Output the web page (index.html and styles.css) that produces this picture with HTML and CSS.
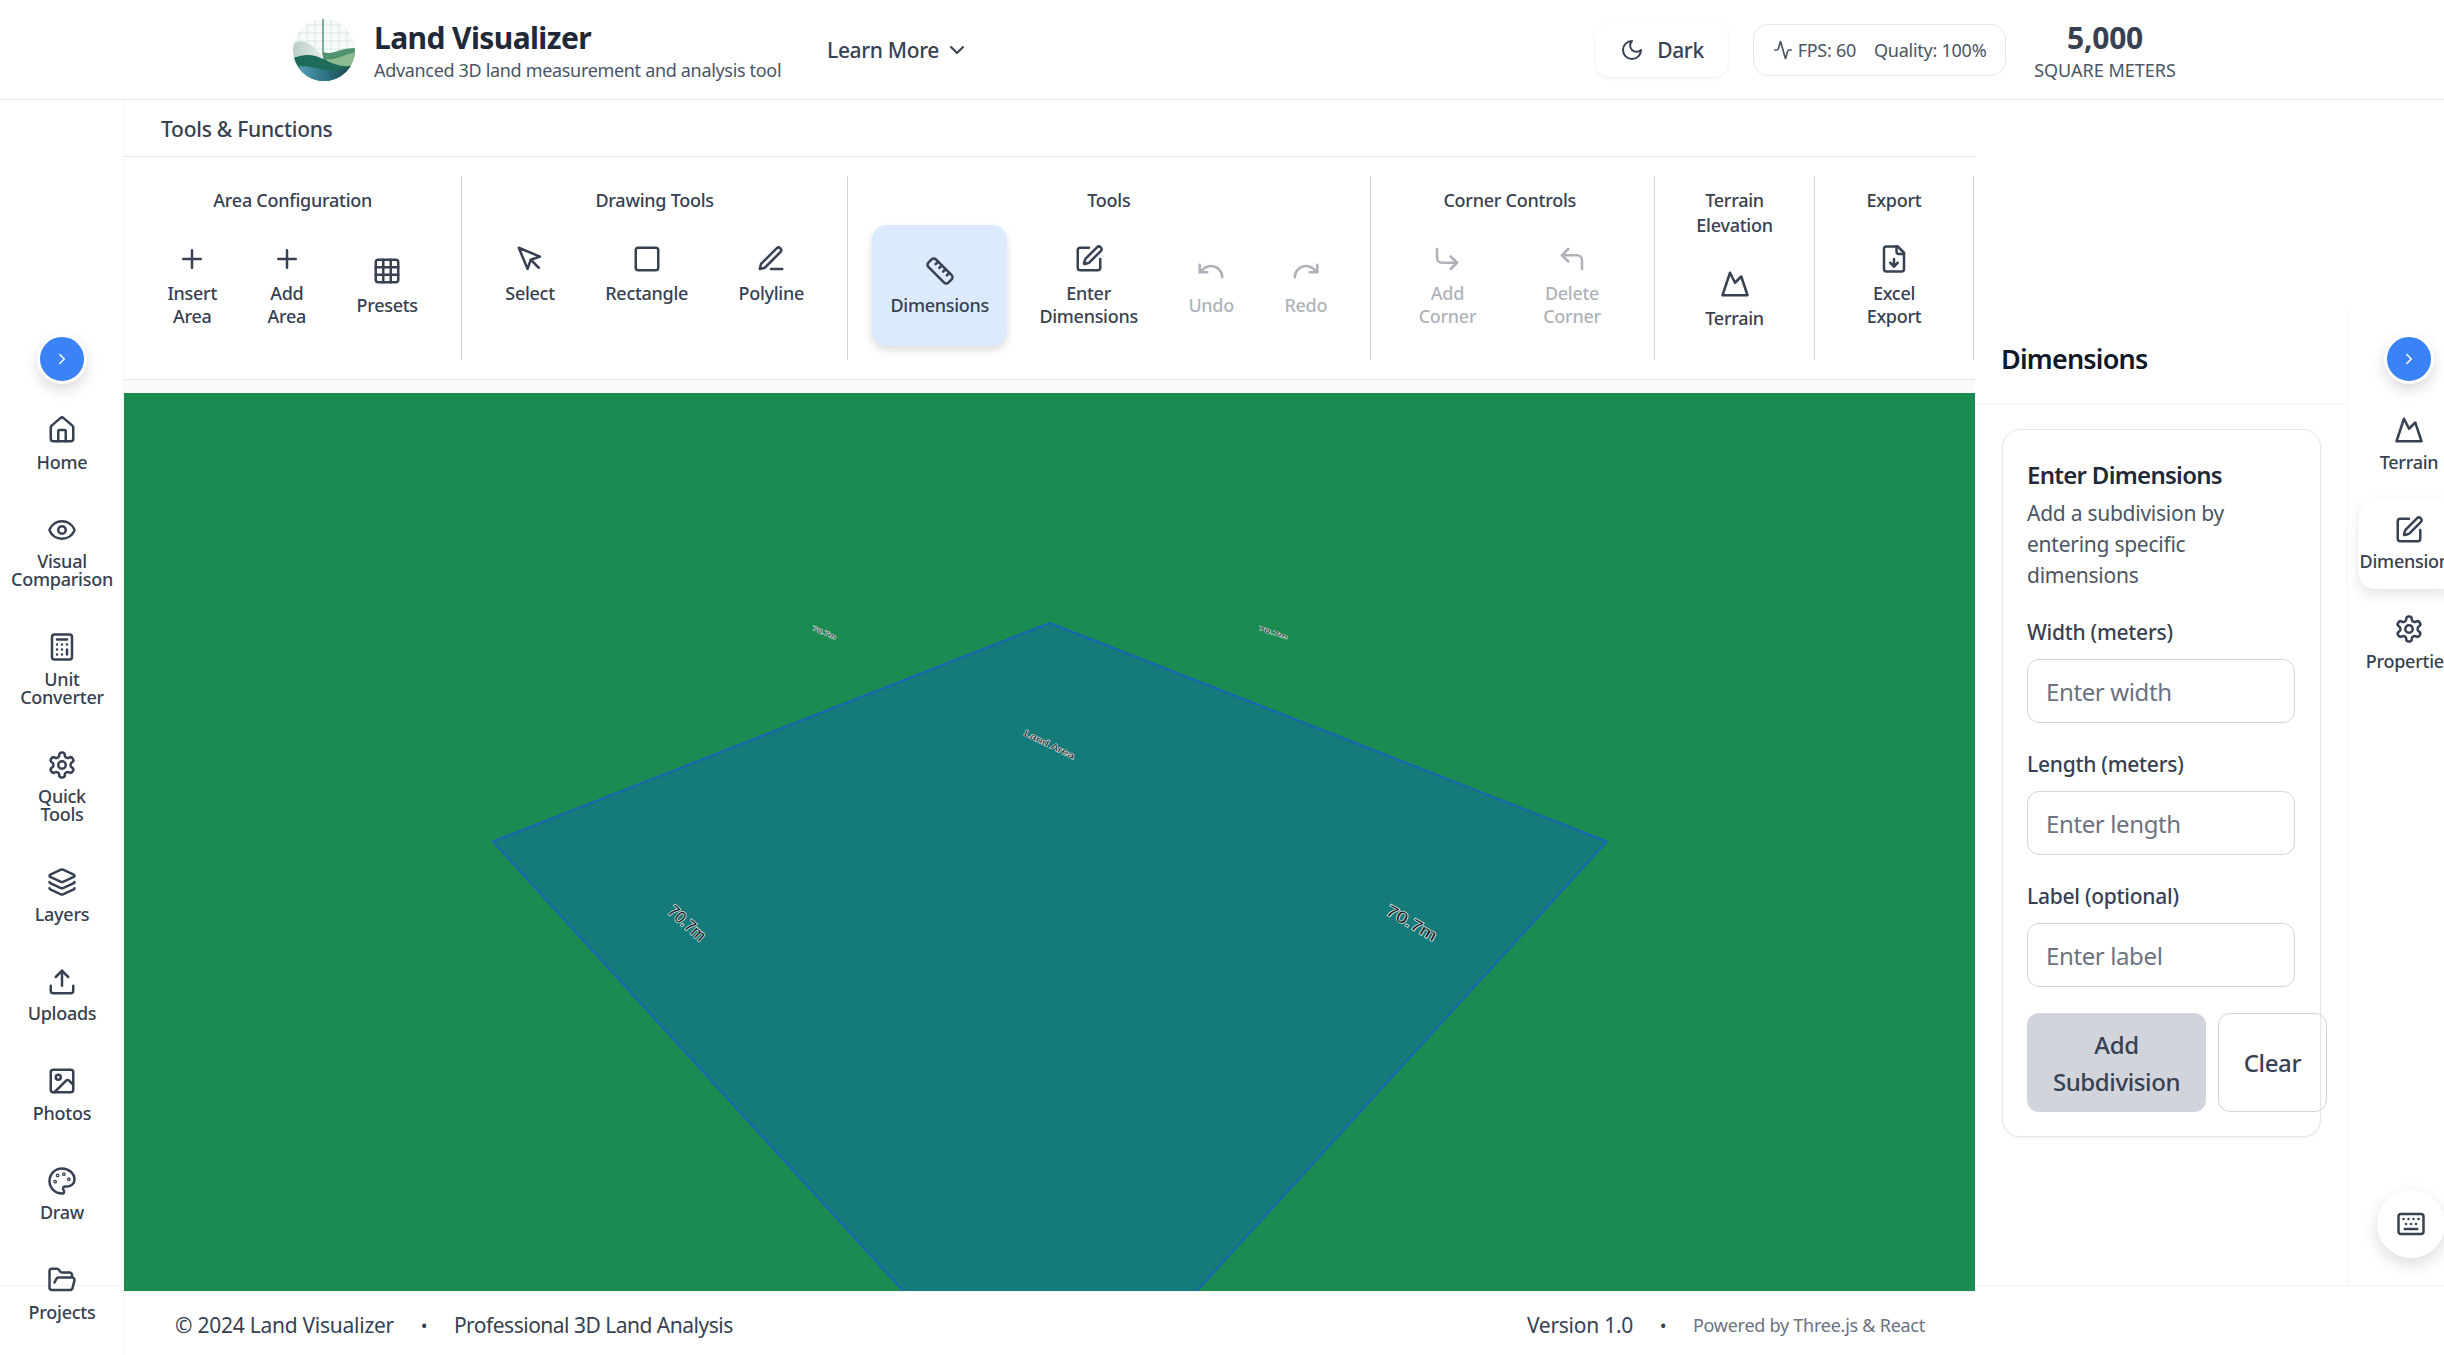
FILE: index.html
```html
<!DOCTYPE html>
<html lang="en">
<head>
<meta charset="utf-8">
<title>Land Visualizer</title>
<link rel="stylesheet" href="styles.css">
</head>
<body>
<svg class="sprite" aria-hidden="true">
  <symbol id="i-home" viewBox="0 0 24 24"><path d="M15 21v-8a1 1 0 0 0-1-1h-4a1 1 0 0 0-1 1v8"/><path d="M3 10a2 2 0 0 1 .709-1.528l7-5.999a2 2 0 0 1 2.582 0l7 5.999A2 2 0 0 1 21 10v9a2 2 0 0 1-2 2H5a2 2 0 0 1-2-2z"/></symbol>
  <symbol id="i-eye" viewBox="0 0 24 24"><path d="M2.062 12.348a1 1 0 0 1 0-.696 10.75 10.75 0 0 1 19.876 0 1 1 0 0 1 0 .696 10.75 10.75 0 0 1-19.876 0"/><circle cx="12" cy="12" r="3"/></symbol>
  <symbol id="i-calc" viewBox="0 0 24 24"><rect x="4" y="2" width="16" height="20" rx="2"/><line x1="8" x2="16" y1="6" y2="6"/><line x1="16" x2="16" y1="14" y2="18"/><path d="M16 10h.01M12 10h.01M8 10h.01M12 14h.01M8 14h.01M12 18h.01M8 18h.01"/></symbol>
  <symbol id="i-gear" viewBox="0 0 24 24"><path d="M12.22 2h-.44a2 2 0 0 0-2 2v.18a2 2 0 0 1-1 1.73l-.43.25a2 2 0 0 1-2 0l-.15-.08a2 2 0 0 0-2.73.73l-.22.38a2 2 0 0 0 .73 2.73l.15.1a2 2 0 0 1 1 1.72v.51a2 2 0 0 1-1 1.74l-.15.09a2 2 0 0 0-.73 2.73l.22.38a2 2 0 0 0 2.73.73l.15-.08a2 2 0 0 1 2 0l.43.25a2 2 0 0 1 1 1.73V20a2 2 0 0 0 2 2h.44a2 2 0 0 0 2-2v-.18a2 2 0 0 1 1-1.73l.43-.25a2 2 0 0 1 2 0l.15.08a2 2 0 0 0 2.73-.73l.22-.39a2 2 0 0 0-.73-2.73l-.15-.08a2 2 0 0 1-1-1.74v-.5a2 2 0 0 1 1-1.74l.15-.09a2 2 0 0 0 .73-2.73l-.22-.38a2 2 0 0 0-2.73-.73l-.15.08a2 2 0 0 1-2 0l-.43-.25a2 2 0 0 1-1-1.73V4a2 2 0 0 0-2-2z"/><circle cx="12" cy="12" r="3"/></symbol>
  <symbol id="i-layers" viewBox="0 0 24 24"><path d="M12.83 2.18a2 2 0 0 0-1.66 0L2.6 6.08a1 1 0 0 0 0 1.83l8.58 3.91a2 2 0 0 0 1.66 0l8.58-3.9a1 1 0 0 0 0-1.83z"/><path d="M2 12a1 1 0 0 0 .58.91l8.6 3.91a2 2 0 0 0 1.65 0l8.58-3.9A1 1 0 0 0 22 12"/><path d="M2 17a1 1 0 0 0 .58.91l8.6 3.91a2 2 0 0 0 1.65 0l8.58-3.9A1 1 0 0 0 22 17"/></symbol>
  <symbol id="i-upload" viewBox="0 0 24 24"><path d="M21 15v4a2 2 0 0 1-2 2H5a2 2 0 0 1-2-2v-4"/><polyline points="17 8 12 3 7 8"/><line x1="12" x2="12" y1="3" y2="15"/></symbol>
  <symbol id="i-image" viewBox="0 0 24 24"><rect x="3" y="3" width="18" height="18" rx="2"/><circle cx="9" cy="9" r="2"/><path d="m21 15-3.086-3.086a2 2 0 0 0-2.828 0L6 21"/></symbol>
  <symbol id="i-palette" viewBox="0 0 24 24"><circle cx="13.5" cy="6.5" r=".5"/><circle cx="17.5" cy="10.5" r=".5"/><circle cx="8.5" cy="7.5" r=".5"/><circle cx="6.5" cy="12.5" r=".5"/><path d="M12 2C6.5 2 2 6.5 2 12s4.5 10 10 10c.926 0 1.648-.746 1.648-1.688 0-.437-.18-.835-.437-1.125-.29-.289-.438-.652-.438-1.125a1.64 1.64 0 0 1 1.668-1.668h1.996c3.051 0 5.555-2.503 5.555-5.554C21.965 6.012 17.461 2 12 2z"/></symbol>
  <symbol id="i-folder" viewBox="0 0 24 24"><path d="m6 14 1.5-2.9A2 2 0 0 1 9.24 10H20a2 2 0 0 1 1.94 2.5l-1.54 6a2 2 0 0 1-1.95 1.5H4a2 2 0 0 1-2-2V5a2 2 0 0 1 2-2h3.9a2 2 0 0 1 1.69.9l.81 1.2a2 2 0 0 0 1.69.9H18a2 2 0 0 1 2 2v2"/></symbol>
  <symbol id="i-plus" viewBox="0 0 24 24"><path d="M5 12h14M12 5v14"/></symbol>
  <symbol id="i-grid" viewBox="0 0 24 24"><rect x="3" y="3" width="18" height="18" rx="2"/><path d="M3 9h18M3 15h18M9 3v18M15 3v18"/></symbol>
  <symbol id="i-pointer" viewBox="0 0 24 24"><path d="m3 3 7.07 16.97 2.51-7.39 7.39-2.51L3 3z"/><path d="m13 13 6 6"/></symbol>
  <symbol id="i-square" viewBox="0 0 24 24"><rect x="3" y="3" width="18" height="18" rx="2"/></symbol>
  <symbol id="i-pen" viewBox="0 0 24 24"><path d="M12 20h9"/><path d="M16.5 3.5a2.12 2.12 0 0 1 3 3L7 19l-4 1 1-4Z"/></symbol>
  <symbol id="i-ruler" viewBox="0 0 24 24"><path d="M21.3 15.3a2.4 2.4 0 0 1 0 3.4l-2.6 2.6a2.4 2.4 0 0 1-3.4 0L2.7 8.7a2.41 2.41 0 0 1 0-3.4l2.6-2.6a2.41 2.41 0 0 1 3.4 0Z"/><path d="m14.5 12.5 2-2M11.5 9.5l2-2M8.5 6.5l2-2M17.5 15.5l2-2"/></symbol>
  <symbol id="i-edit" viewBox="0 0 24 24"><path d="M12 3H5a2 2 0 0 0-2 2v14a2 2 0 0 0 2 2h14a2 2 0 0 0 2-2v-7"/><path d="M18.375 2.625a1 1 0 0 1 3 3l-9.013 9.014a2 2 0 0 1-.853.505l-2.873.84a.5.5 0 0 1-.62-.62l.84-2.873a2 2 0 0 1 .506-.852z"/></symbol>
  <symbol id="i-undo" viewBox="0 0 24 24"><path d="M3 7v6h6"/><path d="M21 17a9 9 0 0 0-9-9 9 9 0 0 0-6 2.3L3 13"/></symbol>
  <symbol id="i-redo" viewBox="0 0 24 24"><path d="M21 7v6h-6"/><path d="M3 17a9 9 0 0 1 9-9 9 9 0 0 1 6 2.3l3 2.7"/></symbol>
  <symbol id="i-cdr" viewBox="0 0 24 24"><polyline points="15 10 20 15 15 20"/><path d="M4 4v7a4 4 0 0 0 4 4h12"/></symbol>
  <symbol id="i-cul" viewBox="0 0 24 24"><polyline points="9 14 4 9 9 4"/><path d="M20 20v-7a4 4 0 0 0-4-4H4"/></symbol>
  <symbol id="i-mountain" viewBox="0 0 24 24"><path d="m8 3 4 8 5-5 5 15H2L8 3z"/></symbol>
  <symbol id="i-file" viewBox="0 0 24 24"><path d="M15 2H6a2 2 0 0 0-2 2v16a2 2 0 0 0 2 2h12a2 2 0 0 0 2-2V7Z"/><path d="M14 2v4a2 2 0 0 0 2 2h4"/><path d="M12 18v-6"/><path d="m9 15 3 3 3-3"/></symbol>
  <symbol id="i-right" viewBox="0 0 24 24"><path d="m9 18 6-6-6-6"/></symbol>
  <symbol id="i-down" viewBox="0 0 24 24"><path d="m6 9 6 6 6-6"/></symbol>
  <symbol id="i-moon" viewBox="0 0 24 24"><path d="M12 3a6 6 0 0 0 9 9 9 9 0 1 1-9-9Z"/></symbol>
  <symbol id="i-activity" viewBox="0 0 24 24"><path d="M22 12h-2.48a2 2 0 0 0-1.93 1.46l-2.35 8.36a.25.25 0 0 1-.48 0L9.24 2.18a.25.25 0 0 0-.48 0l-2.35 8.36A2 2 0 0 1 4.49 12H2"/></symbol>
  <symbol id="i-keyboard" viewBox="0 0 24 24"><path d="M10 8h.01M12 12h.01M14 8h.01M16 12h.01M18 8h.01M6 8h.01M7 16h10M8 12h.01"/><rect x="2" y="4" width="20" height="16" rx="2"/></symbol>
</svg>

<header class="topbar">
  <svg class="logo" viewBox="0 0 62 62" aria-label="Land Visualizer logo">
    <defs>
      <clipPath id="logo-clip"><circle cx="31" cy="31" r="31"/></clipPath>
      <linearGradient id="logo-back" x1="0" x2="1" y1="0" y2="0"><stop offset="0" stop-color="#b9cfc6"/><stop offset="1" stop-color="#eef3f0"/></linearGradient>
      <linearGradient id="logo-water" x1="0" x2="1" y1="0" y2="0"><stop offset="0" stop-color="#5aa6c2"/><stop offset=".55" stop-color="#2c6f80"/><stop offset="1" stop-color="#173a44"/></linearGradient>
    </defs>
    <g clip-path="url(#logo-clip)">
      <rect width="62" height="62" fill="#f6faf8"/>
      <path d="M6 0v40M14 0v40M22 0v40M38 0v40M46 0v40M54 0v40M0 6h62M0 14h62M0 22h62M0 30h62" stroke="#cfe2da" stroke-width=".7" fill="none"/>
      <path d="M30 0v40" stroke="#2f7a62" stroke-width="1.2" fill="none"/>
      <path d="M0 25C6 21 13 22 19 27S28 37 36 38L36 50H0Z" fill="url(#logo-back)"/>
      <path d="M30 33C38 37 47 29 62 29V52H30Z" fill="#4f946f"/>
      <path d="M34 40C44 42 52 34 62 34V52H34Z" fill="#8dbb90"/>
      <path d="M0 39C12 35 20 35 30 40S48 48 58 47V62H0Z" fill="#1d6b58"/>
      <path d="M0 48C12 46 22 49 32 51S50 52 58 46L62 62H0Z" fill="url(#logo-water)"/>
    </g>
  </svg>
  <div class="brand">
    <div class="brand-title">Land Visualizer</div>
    <div class="brand-sub">Advanced 3D land measurement and analysis tool</div>
  </div>
  <button class="learn">Learn More <svg class="ic ic-24"><use href="#i-down"/></svg></button>
  <button class="theme"><svg class="ic ic-24"><use href="#i-moon"/></svg>Dark</button>
  <div class="perf"><svg class="ic ic-20"><use href="#i-activity"/></svg><span class="perf-fps">FPS: 60</span><span>Quality: 100%</span></div>
  <div class="area"><div class="area-num">5,000</div><div class="area-unit">SQUARE METERS</div></div>
</header>

<div class="main">
  <aside class="rail rail-left">
    <button class="rail-toggle"><svg class="ic ic-18"><use href="#i-right"/></svg></button>
    <nav class="rail-items">
      <a class="rail-item"><svg class="ic ic-30"><use href="#i-home"/></svg><span>Home</span></a>
      <a class="rail-item"><svg class="ic ic-30"><use href="#i-eye"/></svg><span>Visual Comparison</span></a>
      <a class="rail-item"><svg class="ic ic-30"><use href="#i-calc"/></svg><span>Unit Converter</span></a>
      <a class="rail-item"><svg class="ic ic-30"><use href="#i-gear"/></svg><span>Quick<br>Tools</span></a>
      <a class="rail-item"><svg class="ic ic-30"><use href="#i-layers"/></svg><span>Layers</span></a>
      <a class="rail-item"><svg class="ic ic-30"><use href="#i-upload"/></svg><span>Uploads</span></a>
      <a class="rail-item"><svg class="ic ic-30"><use href="#i-image"/></svg><span>Photos</span></a>
      <a class="rail-item"><svg class="ic ic-30"><use href="#i-palette"/></svg><span>Draw</span></a>
      <a class="rail-item"><svg class="ic ic-30"><use href="#i-folder"/></svg><span>Projects</span></a>
    </nav>
  </aside>

  <section class="center">
    <div class="tools-title">Tools &amp; Functions</div>
    <div class="toolbar">
      <div class="group group-first">
        <div class="group-title">Area Configuration</div>
        <div class="group-body">
          <button class="tool"><svg class="ic ic-30"><use href="#i-plus"/></svg><span>Insert<br>Area</span></button>
          <button class="tool"><svg class="ic ic-30"><use href="#i-plus"/></svg><span>Add<br>Area</span></button>
          <button class="tool"><svg class="ic ic-30"><use href="#i-grid"/></svg><span>Presets</span></button>
        </div>
      </div>
      <div class="group">
        <div class="group-title">Drawing Tools</div>
        <div class="group-body">
          <button class="tool tool-top"><svg class="ic ic-30"><use href="#i-pointer"/></svg><span>Select</span></button>
          <button class="tool tool-top"><svg class="ic ic-30"><use href="#i-square"/></svg><span>Rectangle</span></button>
          <button class="tool tool-top"><svg class="ic ic-30"><use href="#i-pen"/></svg><span>Polyline</span></button>
        </div>
      </div>
      <div class="group group-tools">
        <div class="group-title">Tools</div>
        <div class="group-body">
          <button class="tool tool-active"><svg class="ic ic-30"><use href="#i-ruler"/></svg><span>Dimensions</span></button>
          <button class="tool"><svg class="ic ic-30"><use href="#i-edit"/></svg><span>Enter<br>Dimensions</span></button>
          <button class="tool tool-off"><svg class="ic ic-30"><use href="#i-undo"/></svg><span>Undo</span></button>
          <button class="tool tool-off"><svg class="ic ic-30"><use href="#i-redo"/></svg><span>Redo</span></button>
        </div>
      </div>
      <div class="group group-corner">
        <div class="group-title">Corner Controls</div>
        <div class="group-body">
          <button class="tool tool-off"><svg class="ic ic-30"><use href="#i-cdr"/></svg><span>Add<br>Corner</span></button>
          <button class="tool tool-off"><svg class="ic ic-30"><use href="#i-cul"/></svg><span>Delete<br>Corner</span></button>
        </div>
      </div>
      <div class="group group-narrow">
        <div class="group-title">Terrain<br>Elevation</div>
        <div class="group-body">
          <button class="tool"><svg class="ic ic-30"><use href="#i-mountain"/></svg><span>Terrain</span></button>
        </div>
      </div>
      <div class="group group-narrow">
        <div class="group-title">Export</div>
        <div class="group-body">
          <button class="tool"><svg class="ic ic-30"><use href="#i-file"/></svg><span>Excel<br>Export</span></button>
        </div>
      </div>
    </div>
    <div class="toolbar-gap"></div>
    <div class="scene">
      <svg class="scene-svg" viewBox="0 0 1851 898">
        <polygon class="land" points="925.6,230 1483,448.5 1071,900 781,900 369,448.5"/>
        <text class="dim" transform="translate(562 531) rotate(42) scale(1 1.05)" font-size="16">70.7m</text>
        <text class="dim" transform="translate(1287 531) rotate(30) scale(1.25 1)" font-size="16">70.7m</text>
        <text class="dim dim-thin" transform="translate(925 352) rotate(26) scale(1.1 .8)" font-size="11">Land Area</text>
        <text class="dim dim-thin" transform="translate(700 240) rotate(22) scale(1 .7)" font-size="9">70.7m</text>
        <text class="dim dim-thin" transform="translate(1149 240) rotate(18) scale(1.2 .65)" font-size="9">70.7m</text>
      </svg>
    </div>
    <footer class="footer">
      <span>© 2024 Land Visualizer</span><span class="dot">•</span><span class="footer-tight">Professional 3D Land Analysis</span>
      <span class="footer-right">Version 1.0</span><span class="dot">•</span><span class="powered">Powered by Three.js &amp; React</span>
    </footer>
  </section>

  <aside class="panel">
    <div class="panel-head">Dimensions</div>
    <div class="card">
      <h3 class="card-title">Enter Dimensions</h3>
      <p class="card-sub">Add a subdivision by entering specific dimensions</p>
      <label class="field-label">Width (meters)</label>
      <input class="field" placeholder="Enter width">
      <label class="field-label">Length (meters)</label>
      <input class="field" placeholder="Enter length">
      <label class="field-label">Label (optional)</label>
      <input class="field" placeholder="Enter label">
      <div class="actions">
        <button class="btn btn-add">Add<br>Subdivision</button>
        <button class="btn btn-clear">Clear</button>
      </div>
    </div>
  </aside>

  <aside class="rail rail-right">
    <button class="rail-toggle"><svg class="ic ic-18"><use href="#i-right"/></svg></button>
    <nav class="rail-items">
      <a class="rail-item"><svg class="ic ic-30"><use href="#i-mountain"/></svg><span>Terrain</span></a>
      <a class="rail-item rail-item-active"><svg class="ic ic-30"><use href="#i-edit"/></svg><span>Dimensions</span></a>
      <a class="rail-item"><svg class="ic ic-30"><use href="#i-gear"/></svg><span>Properties</span></a>
    </nav>
  </aside>
</div>

<button class="fab"><svg class="ic ic-30"><use href="#i-keyboard"/></svg></button>
</body>
</html>
```
FILE: styles.css
```css
* { box-sizing: border-box; }
html, body { margin: 0; height: 100%; }
body {
  height: 1355px;
  width: 2444px;
  overflow: hidden;
  display: flex;
  flex-direction: column;
  background: #fff;
  color: #374151;
  font-family: "Noto Sans", "Liberation Sans", sans-serif;
  letter-spacing: -.016em;
  position: relative;
}
button, input { font-family: inherit; letter-spacing: -.016em; }
button { background: none; border: 0; color: inherit; padding: 0; }
.sprite { position: absolute; width: 0; height: 0; }
.ic { fill: none; stroke: currentColor; stroke-width: 2; stroke-linecap: round; stroke-linejoin: round; flex: none; display: block; }
.ic-18 { width: 18px; height: 18px; }
.ic-20 { width: 20px; height: 20px; }
.ic-24 { width: 24px; height: 24px; }
.ic-30 { width: 30px; height: 30px; }

/* header */
.topbar {
  height: 100px;
  flex: none;
  border-bottom: 1px solid #e5e7eb;
  display: flex;
  align-items: center;
  padding: 0 266px 0 293px;
}
.logo { width: 62px; height: 62px; flex: none; margin-right: 19px; }
.brand { width: 453px; padding-top: 3px; }
.brand-title { font-size: 30px; font-weight: 700; line-height: 38px; color: #1f2937; letter-spacing: -.02em; }
.brand-sub { font-size: 18px; line-height: 27px; color: #4b5563; white-space: nowrap; letter-spacing: -.018em; }
.learn { display: flex; align-items: center; gap: 6px; font-size: 21px; font-weight: 500; color: #374151; }
.theme {
  margin-left: auto;
  width: 133px;
  height: 55px;
  border-radius: 15px;
  display: flex;
  align-items: center;
  justify-content: center;
  gap: 13px;
  padding-left: 1px;
  font-size: 21px;
  font-weight: 500;
  box-shadow: 0 1px 4px rgba(0,0,0,.07);
}
.perf {
  margin-left: 25px;
  width: 253px;
  height: 52px;
  border: 1px solid #e5e7eb;
  border-radius: 15px;
  display: flex;
  align-items: center;
  justify-content: center;
  font-size: 18px;
  color: #4b5563;
}
.perf .ic { margin-right: 5px; }
.perf-fps { margin-right: 18px; }
.area { margin-left: 26px; width: 146px; text-align: center; padding-top: 3px; }
.area-num { font-size: 30px; font-weight: 700; line-height: 38px; color: #374151; }
.area-unit { font-size: 18px; line-height: 27px; color: #4b5563; white-space: nowrap; letter-spacing: 0; }

/* layout */
.main { flex: 1; display: flex; min-height: 0; }
.center { width: 1851px; flex: none; display: flex; flex-direction: column; box-shadow: -1px 0 0 #f3f4f6; z-index: 1; }

/* rails */
.rail { flex: none; display: flex; flex-direction: column; border-bottom: 1px solid #f3f4f6; }
.rail-left { width: 124px; height: 1186px; padding-top: 234px; position: relative; z-index: 2; }
.rail-right { width: 97px; height: 976px; margin-top: 210px; padding-top: 24px; border-left: 1px solid #f3f4f6; }
.rail-toggle {
  width: 50px;
  height: 50px;
  margin-left: 37px;
  border-radius: 50%;
  background: #3b82f6;
  border: 3px solid #fff;
  box-shadow: 0 6px 14px rgba(0,0,0,.14);
  color: #fff;
  display: flex;
  align-items: center;
  justify-content: center;
  flex: none;
}
.rail-right .rail-toggle { margin-left: 36px; }
.rail-items { display: flex; flex-direction: column; gap: 10.5px; margin-top: 16px; }
.rail-item {
  width: 100px;
  margin-left: 12px;
  padding: 15px 0 18.5px;
  display: flex;
  flex-direction: column;
  align-items: center;
  gap: 7.5px;
  font-size: 18px;
  font-weight: 500;
  line-height: 18px;
  text-align: center;
  color: #374151;
  border-radius: 15px;
}
.rail-right .rail-item { margin-left: 11px; }
.rail-item-active { box-shadow: 0 6px 14px rgba(0,0,0,.1); background: #fff; }

/* toolbar */
.tools-title {
  height: 57px;
  flex: none;
  border-bottom: 1px solid #e5e7eb;
  padding-left: 37px;
  font-size: 21px;
  font-weight: 500;
  line-height: 58px;
}
.toolbar {
  height: 223px;
  flex: none;
  padding: 19px 0;
  border-bottom: 1px solid #e5e7eb;
  display: flex;
}
.group {
  flex: none;
  display: flex;
  flex-direction: column;
  padding: 12px 25px 2px;
  border-right: 1px solid #d1d5db;
}
.group-first { padding-left: 25.5px; padding-right: 25.5px; }
.group-tools { padding-left: 24.5px; padding-right: 24.5px; }
.group-corner { padding: 12px 35.5px 2px 30px; }
.group-narrow { width: 159.5px; padding-left: 0; padding-right: 0; align-items: center; }
.group-title { font-size: 18px; font-weight: 500; line-height: 25px; text-align: center; white-space: nowrap; }
.group-body { flex: 1; display: flex; align-items: center; justify-content: center; gap: 14.5px; }
.group-corner .group-body { gap: 31px; }
.tool {
  min-height: 121px;
  padding: 18px 18px 17px;
  display: flex;
  flex-direction: column;
  align-items: center;
  justify-content: center;
  gap: 8px;
  font-size: 18px;
  font-weight: 500;
  line-height: 23px;
  color: #374151;
  border-radius: 15px;
  white-space: nowrap;
}
.tool-top { justify-content: flex-start; padding-top: 19px; }
.tool-active { background: #dbeafe; box-shadow: 0 4px 8px rgba(0,0,0,.14); }
.tool-off { opacity: .4; }

/* scene */
.toolbar-gap { height: 13px; flex: none; background: #f9fafb; }
.scene { height: 898px; flex: none; background: #1b8c51; overflow: hidden; }
.scene-svg { display: block; width: 1851px; height: 898px; }
.land { fill: #147a7a; stroke: #1766b4; stroke-width: 2; }
.dim {
  fill: #15181b;
  stroke: #dfe3e3;
  stroke-width: 1.5;
  paint-order: stroke;
  text-anchor: middle;
  dominant-baseline: middle;
  font-family: "Liberation Sans", sans-serif;
  letter-spacing: 0;
}
.dim-thin { stroke-width: 1.3; }

/* footer */
.footer {
  height: 64px;
  flex: none;
  border-top: 1px solid #f3f4f6;
  padding: 2px 50px 0 51px;
  display: flex;
  align-items: center;
  font-size: 21px;
  color: #374151;
}
.dot { margin: 0 26.7px; font-size: 18px; }
.footer-tight { letter-spacing: -.024em; }
.footer-right { margin-left: auto; }
.powered { font-size: 18px; color: #6b7280; }

/* panel */
.panel { width: 372px; flex: none; margin-top: 210px; height: 976px; border-bottom: 1px solid #f3f4f6; }
.panel-head {
  height: 94px;
  border-bottom: 1px solid #f3f4f6;
  padding-left: 26px;
  font-size: 27px;
  font-weight: 600;
  line-height: 97px;
  color: #111827;
  letter-spacing: -.03em;
}
.card {
  margin: 25px 26px 0 27px;
  padding: 27px 24px 24px 24px;
  height: 708px;
  border: 1px solid #e5e7eb;
  border-radius: 18px;
  box-shadow: 0 1px 3px rgba(0,0,0,.06);
  background: #fff;
}
.card-title { margin: 0; font-size: 24px; font-weight: 600; line-height: 36px; color: #1f2937; letter-spacing: -.03em; }
.card-sub { margin: 5px 0 26px; font-size: 21px; line-height: 31px; color: #4b5563; }
.field-label { display: block; font-size: 21px; font-weight: 500; line-height: 31px; color: #374151; margin-bottom: 11px; }
.field {
  display: block;
  width: 268px;
  height: 64px;
  padding: 0 18px;
  border: 1px solid #d1d5db;
  border-radius: 12px;
  font-size: 24px;
  color: #374151;
  margin-bottom: 26px;
  background: #fff;
}
.field::placeholder { color: #6b7280; opacity: 1; }
.actions { display: flex; gap: 12px; height: 99px; }
.btn { flex: none; border-radius: 12px; font-size: 24px; font-weight: 500; line-height: 37px; color: #374151; }
.btn-add { width: 179px; background: #d1d5db; }
.btn-clear { width: 109px; background: transparent; border: 1px solid #d1d5db; }

/* keyboard button */
.fab {
  position: absolute;
  left: 2377px;
  top: 1190px;
  width: 68px;
  height: 68px;
  border-radius: 50%;
  background: #fff;
  box-shadow: 0 6px 16px rgba(0,0,0,.14);
  display: flex;
  align-items: center;
  justify-content: center;
  z-index: 3;
  color: #374151;
}
```
